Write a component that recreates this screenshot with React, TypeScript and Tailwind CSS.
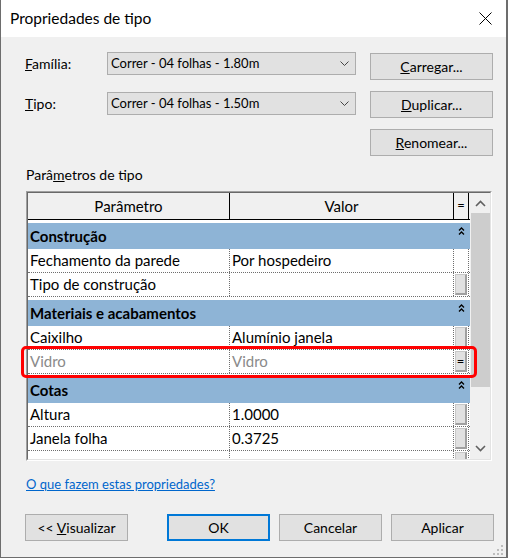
type Row = { p: string; v: string; btn: boolean; dim?: boolean; eq?: boolean };
type Group = { title: string; rows: Row[] };

const groups: Group[] = [
  {
    title: "Construção",
    rows: [
      { p: "Fechamento da parede", v: "Por hospedeiro", btn: false },
      { p: "Tipo de construção", v: "", btn: true },
    ],
  },
  {
    title: "Materiais e acabamentos",
    rows: [
      { p: "Caixilho", v: "Alumínio janela", btn: true },
      { p: "Vidro", v: "Vidro", btn: true, dim: true, eq: true },
    ],
  },
  {
    title: "Cotas",
    rows: [
      { p: "Altura", v: "1.0000", btn: true },
      { p: "Janela folha", v: "0.3725", btn: true },
      { p: "", v: "", btn: true },
    ],
  },
];

function Chevron() {
  return (
    <svg width="9" height="5" viewBox="0 0 9 5" className="shrink-0">
      <path d="M0.5 0.5 L4.5 4.5 L8.5 0.5" fill="none" stroke="#444" strokeWidth="1" />
    </svg>
  );
}

function Select({ value }: { value: string }) {
  return (
    <div className="w-[249px] h-[23px] bg-[#e1e1e1] border border-[#adadad] flex items-center pl-[3px] pr-[6px] text-[13px] text-black">
      <span className="flex-1">{value}</span>
      <Chevron />
    </div>
  );
}

function Btn({ children, className = "" }: { children: React.ReactNode; className?: string }) {
  return (
    <div
      className={`w-[123px] h-[27px] bg-[#e1e1e1] border border-[#adadad] flex items-center justify-center text-[14px] text-black ${className}`}
    >
      {children}
    </div>
  );
}

function DialogBtn({ children, primary = false }: { children: React.ReactNode; primary?: boolean }) {
  return (
    <div
      className={`w-[103px] h-[27px] bg-[#e1e1e1] flex items-center justify-center text-[14px] text-black ${
        primary ? "border-2 border-[#0078d7]" : "border border-[#adadad]"
      }`}
    >
      {children}
    </div>
  );
}

function Carets() {
  return (
    <svg width="7" height="8" viewBox="0 0 7 8">
      <path d="M1 3.5 L3.5 1 L6 3.5 M1 7.5 L3.5 5 L6 7.5" fill="none" stroke="#000" strokeWidth="1.3" />
    </svg>
  );
}

function CellButton({ eq }: { eq?: boolean }) {
  return (
    <div className="w-[12px] h-[21px] bg-[#e1e1e1] border border-[#c8c8c8] border-b-2 border-r-2 border-b-[#a0a0a0] border-r-[#a0a0a0] flex items-center justify-center text-[13px] leading-none text-black">
      {eq ? "=" : ""}
    </div>
  );
}

function ScrollArrow({ up }: { up: boolean }) {
  return (
    <svg width="11" height="7" viewBox="0 0 11 7">
      <path
        d={up ? "M1 6 L5.5 1.5 L10 6" : "M1 1 L5.5 5.5 L10 1"}
        fill="none"
        stroke="#606060"
        strokeWidth="1.6"
      />
    </svg>
  );
}

export default function App() {
  return (
    <div className="relative w-[508px] h-[558px] bg-[#f0f0f0] border-l border-r-2 border-b border-[#6d6d6d] overflow-hidden text-black [font-family:Lato,sans-serif]">
      {/* Title bar */}
      <div className="h-[37px] bg-white flex items-center pl-[9px] pr-[14px]">
        <span className="flex-1 text-[15.5px]">Propriedades de tipo</span>
        <svg width="13" height="13" viewBox="0 0 13 13">
          <path d="M0.5 0.5 L12.5 12.5 M12.5 0.5 L0.5 12.5" stroke="#000" strokeWidth="1" />
        </svg>
      </div>

      <div className="pl-[24px] pt-[15px]">
        {/* Família */}
        <div className="flex items-start h-[28px]">
          <div className="w-[82px] h-[23px] flex items-center text-[14px]">
            <span>
              <span className="underline">F</span>amília:
            </span>
          </div>
          <Select value="Correr - 04 folhas - 1.80m" />
          <Btn className="ml-[14px] mt-[1px]">
            <span>
              <span className="underline">C</span>arregar...
            </span>
          </Btn>
        </div>

        {/* Tipo */}
        <div className="flex items-start h-[27px] mt-[11px]">
          <div className="w-[82px] h-[23px] mt-[1px] flex items-center text-[14px]">
            <span>
              <span className="underline">T</span>ipo:
            </span>
          </div>
          <div className="mt-[1px]">
            <Select value="Correr - 04 folhas - 1.50m" />
          </div>
          <Btn className="ml-[14px]">
            <span>
              <span className="underline">D</span>uplicar...
            </span>
          </Btn>
        </div>

        {/* Renomear */}
        <div className="flex h-[27px] mt-[11px] pl-[345px]">
          <Btn>
            <span>
              <span className="underline">R</span>enomear...
            </span>
          </Btn>
        </div>

        <div className="mt-[10px] h-[18px] leading-[18px] pl-[1px] text-[14px]">
          Parâ<span className="underline">m</span>etros de tipo
        </div>

        {/* Table */}
        <div className="mt-[7px] ml-[1px] w-[466px] h-[270px] border border-t-[#a0a0a0] border-l-[#a0a0a0] border-r-white border-b-white">
          <div className="w-full h-full border border-t-[#696969] border-l-[#696969] border-r-[#e3e3e3] border-b-[#e3e3e3] flex">
            <div className="w-[442px] h-full bg-white overflow-hidden">
              {/* header */}
              <div className="flex h-[27px] bg-[#f0f0f0] border-b border-black text-[15px]">
                <div className="w-[202px] border-r border-black flex items-center justify-center">Parâmetro</div>
                <div className="w-[224px] border-r border-black flex items-center justify-center">Valor</div>
                <div className="w-[15px] border-r border-black flex items-center justify-center text-[13px]">=</div>
              </div>

              {groups.map((g) => (
                <div key={g.title}>
                  <div className="h-[29px] border-t-[3px] border-white bg-[#8eb4d6] flex">
                    <div className="w-[426px] pl-[2px] flex items-center text-[15px] font-bold">{g.title}</div>
                    <div className="w-[15px] flex justify-center pt-[4px]">
                      <Carets />
                    </div>
                  </div>
                  {g.rows.map((r, i) => (
                    <div
                      key={g.title + i}
                      className={`h-[24px] flex border-b border-dotted border-[#6e6e6e] text-[15px] ${
                        r.dim ? "text-[#8a8a8a]" : "text-black"
                      }`}
                    >
                      <div className="w-[202px] pl-[2px] border-r border-dotted border-[#6e6e6e] flex items-center">
                        {r.p}
                      </div>
                      <div className="w-[224px] pl-[2px] border-r border-dotted border-[#6e6e6e] flex items-center">
                        {r.v}
                      </div>
                      <div className="w-[15px] border-r border-dotted border-[#6e6e6e] flex items-center justify-center">
                        {r.btn && <CellButton eq={r.eq} />}
                      </div>
                    </div>
                  ))}
                </div>
              ))}
            </div>

            {/* scrollbar */}
            <div className="w-[20px] h-full bg-[#f0f0f0] flex flex-col">
              <div className="h-[20px] flex items-center justify-center">
                <ScrollArrow up />
              </div>
              <div className="h-[174px] ml-[1px] bg-[#cdcdcd]" />
              <div className="flex-1" />
              <div className="h-[21px] flex items-center justify-center">
                <ScrollArrow up={false} />
              </div>
            </div>
          </div>
        </div>

        <div className="mt-[14px] h-[18px] leading-[18px] pl-[1px] text-[13px] text-[#0066cc] underline">
          O que fazem estas propriedades?
        </div>

        {/* footer buttons */}
        <div className="mt-[21px] flex">
          <DialogBtn>
            <span>
              &lt;&lt; <span className="underline">V</span>isualizar
            </span>
          </DialogBtn>
          <div className="ml-[39px]">
            <DialogBtn primary>OK</DialogBtn>
          </div>
          <div className="ml-[9px]">
            <DialogBtn>Cancelar</DialogBtn>
          </div>
          <div className="ml-[9px]">
            <DialogBtn>Aplicar</DialogBtn>
          </div>
        </div>
      </div>

      {/* highlight around the Vidro row */}
      <div className="absolute left-[20px] top-[346px] w-[456px] h-[32px] border-[3px] border-[#ff0000] rounded-[5px]" />

      {/* resize grip */}
      <svg className="absolute left-[492px] top-[545px]" width="10" height="10" viewBox="0 0 10 10">
        <rect x="8" y="0" width="2" height="2" fill="#bcbcbc" />
        <rect x="4" y="4" width="2" height="2" fill="#bcbcbc" />
        <rect x="8" y="4" width="2" height="2" fill="#bcbcbc" />
        <rect x="0" y="8" width="2" height="2" fill="#bcbcbc" />
        <rect x="4" y="8" width="2" height="2" fill="#bcbcbc" />
        <rect x="8" y="8" width="2" height="2" fill="#bcbcbc" />
      </svg>
    </div>
  );
}
